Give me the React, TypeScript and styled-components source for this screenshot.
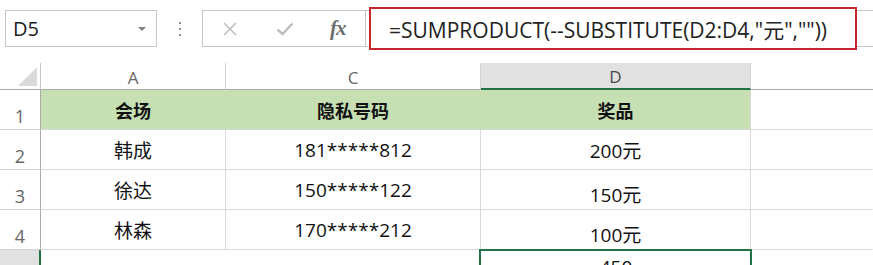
import React, { FC } from 'react'
import styled, { createGlobalStyle } from 'styled-components'

const GREEN = '#217346'
const GRID = '#d9d9d9'
const HEAD_FILL = '#c6e0b4'

type Row = { num: string; cells: string[]; header?: boolean; bottom?: boolean[] }

const rows: Row[] = [
  { num: '1', cells: ['会场', '隐私号码', '奖品'], header: true },
  { num: '2', cells: ['韩成', '181*****812', '200元'] },
  { num: '3', cells: ['徐达', '150*****122', '150元'], bottom: [false, false, true] },
  { num: '4', cells: ['林森', '170*****212', '100元'], bottom: [false, false, true] },
]

const App: FC = () => {
  return (
    <Page>
      <GlobalStyle />
      <Toolbar>
        <NameBox>
          <NameText>D5</NameText>
          <Caret />
        </NameBox>
        <Grip>
          <Dot />
          <Dot />
          <Dot />
        </Grip>
        <FuncBox>
          <IconSlot>
            <svg width="16" height="16" viewBox="0 0 16 16">
              <path d="M2 2 L14 14 M14 2 L2 14" stroke="#bdbdbd" strokeWidth="1.6" fill="none" />
            </svg>
          </IconSlot>
          <IconSlot>
            <svg width="18" height="14" viewBox="0 0 18 14">
              <path d="M1.5 7.5 L6.5 12 L16.5 1.5" stroke="#bdbdbd" strokeWidth="2.4" fill="none" />
            </svg>
          </IconSlot>
          <Fx>fx</Fx>
        </FuncBox>
        <FormulaBar>
          <FormulaHighlight>
            <FormulaText>=SUMPRODUCT(--SUBSTITUTE(D2:D4,"元",""))</FormulaText>
          </FormulaHighlight>
        </FormulaBar>
      </Toolbar>

      <Sheet>
        <Corner />
        <ColHead>A</ColHead>
        <ColHead>C</ColHead>
        <ColHead $selected>D</ColHead>
        <ColHead $last />

        {rows.map((row) => (
          <React.Fragment key={row.num}>
            <RowHead>{row.num}</RowHead>
            {row.cells.map((text, i) => (
              <Cell
                key={i}
                $header={row.header}
                $edge={i === 2}
                $bottom={row.bottom ? row.bottom[i] : false}
              >
                {text}
              </Cell>
            ))}
            <Cell $last />
          </React.Fragment>
        ))}

        <RowHead $selected>5</RowHead>
        <TotalLabel>合计</TotalLabel>
        <ActiveCell>450</ActiveCell>
        <Cell $last />
      </Sheet>
    </Page>
  )
}

export default App

const GlobalStyle = createGlobalStyle`
  html, body {
    margin: 0;
    padding: 0;
    background: #fff;
  }
  body {
    font-family: "Open Sans", "Noto Sans CJK SC", sans-serif;
    overflow: hidden;
  }
`

const Page = styled.div`
  width: 873px;
  height: 265px;
  overflow: hidden;
  background: #fff;
`

const Toolbar = styled.div`
  display: flex;
  align-items: center;
  height: 57px;
  padding: 10px 0 10px 5px;
  box-sizing: border-box;
  margin-bottom: 6px;
`

const NameBox = styled.div`
  display: flex;
  align-items: center;
  justify-content: space-between;
  width: 152px;
  height: 37px;
  box-sizing: border-box;
  border: 1px solid #c6c6c6;
  padding: 0 10px 0 7px;
`

const NameText = styled.span`
  font-size: 20px;
  color: #222;
`

const Caret = styled.span`
  width: 0;
  height: 0;
  border-left: 4px solid transparent;
  border-right: 4px solid transparent;
  border-top: 4px solid #808080;
`

const Grip = styled.div`
  width: 45px;
  display: flex;
  flex-direction: column;
  align-items: center;
  gap: 4px;
`

const Dot = styled.span`
  width: 2px;
  height: 2px;
  background: #8c8c8c;
`

const FuncBox = styled.div`
  display: flex;
  align-items: center;
  width: 164px;
  height: 37px;
  box-sizing: border-box;
  border: 1px solid #c6c6c6;
  padding-left: 17px;
  gap: 35px;
`

const IconSlot = styled.span`
  display: flex;
  align-items: center;
  justify-content: center;
  width: 20px;
`

const Fx = styled.span`
  font-family: "Liberation Serif", serif;
  font-style: italic;
  font-weight: bold;
  font-size: 21px;
  color: #6e6e6e;
  letter-spacing: -1px;
`

const FormulaBar = styled.div`
  flex: 1;
  height: 37px;
  box-sizing: border-box;
  border-top: 1px solid #c6c6c6;
  border-bottom: 1px solid #c6c6c6;
  display: flex;
  align-items: center;
  padding-left: 3px;
`

const FormulaHighlight = styled.div`
  width: 488px;
  height: 43px;
  box-sizing: border-box;
  border: 2px solid #c4262e;
  display: flex;
  align-items: center;
  padding-left: 18px;
  background: #fff;
`

const FormulaText = styled.span`
  font-size: 21px;
  color: #222;
  white-space: nowrap;
`

const Sheet = styled.div`
  display: grid;
  grid-template-columns: 41px 185px 255px 270px 1fr;
  grid-template-rows: 27px repeat(5, 40px);
`

const Corner = styled.div`
  position: relative;
  box-sizing: border-box;
  border-right: 1px solid #c8c8c8;
  border-bottom: 1px solid #ababab;
  &::after {
    content: '';
    position: absolute;
    right: 3px;
    bottom: 3px;
    width: 0;
    height: 0;
    border-left: 19px solid transparent;
    border-bottom: 19px solid #dadada;
  }
`

const ColHead = styled.div<{ $selected?: boolean; $last?: boolean }>`
  display: flex;
  align-items: center;
  justify-content: center;
  box-sizing: border-box;
  font-size: 17px;
  color: ${(p) => (p.$selected ? '#4a4a4a' : '#666')};
  background: ${(p) => (p.$selected ? '#e1e1e1' : '#fff')};
  border-right: ${(p) => (p.$last ? 'none' : '1px solid #d4d4d4')};
  border-bottom: ${(p) => (p.$selected ? `2px solid ${GREEN}` : '1px solid #ababab')};
  padding-top: 2px;
`

const RowHead = styled.div<{ $selected?: boolean }>`
  display: flex;
  align-items: flex-end;
  justify-content: center;
  box-sizing: border-box;
  padding-bottom: 1px;
  font-size: 18px;
  color: #666;
  background: ${(p) => (p.$selected ? '#e1e1e1' : '#fff')};
  border-right: ${(p) => (p.$selected ? `2px solid ${GREEN}` : '1px solid #ababab')};
  border-bottom: 1px solid #d4d4d4;
`

const Cell = styled.div<{ $header?: boolean; $edge?: boolean; $bottom?: boolean; $last?: boolean }>`
  display: flex;
  align-items: ${(p) => (p.$bottom ? 'flex-end' : 'center')};
  justify-content: center;
  box-sizing: border-box;
  padding-bottom: ${(p) => (p.$bottom ? '1px' : '0')};
  font-size: ${(p) => (p.$header ? '18px' : '19px')};
  font-weight: ${(p) => (p.$header ? 700 : 400)};
  color: #111;
  background: ${(p) => (p.$header ? HEAD_FILL : '#fff')};
  border-right: 1px solid
    ${(p) => (p.$last ? 'transparent' : p.$header && !p.$edge ? HEAD_FILL : GRID)};
  border-bottom: 1px solid ${GRID};
  white-space: nowrap;
`

const TotalLabel = styled.div`
  grid-column: span 2;
  display: flex;
  justify-content: center;
  padding-top: 10px;
  font-size: 18px;
  color: #111;
  border-right: 1px solid ${GRID};
`

const ActiveCell = styled.div`
  position: relative;
  display: flex;
  justify-content: center;
  padding-top: 4px;
  font-size: 19px;
  color: #111;
  &::after {
    content: '';
    position: absolute;
    left: -2px;
    top: -1px;
    right: -1px;
    bottom: -1px;
    border: 2px solid ${GREEN};
  }
`
